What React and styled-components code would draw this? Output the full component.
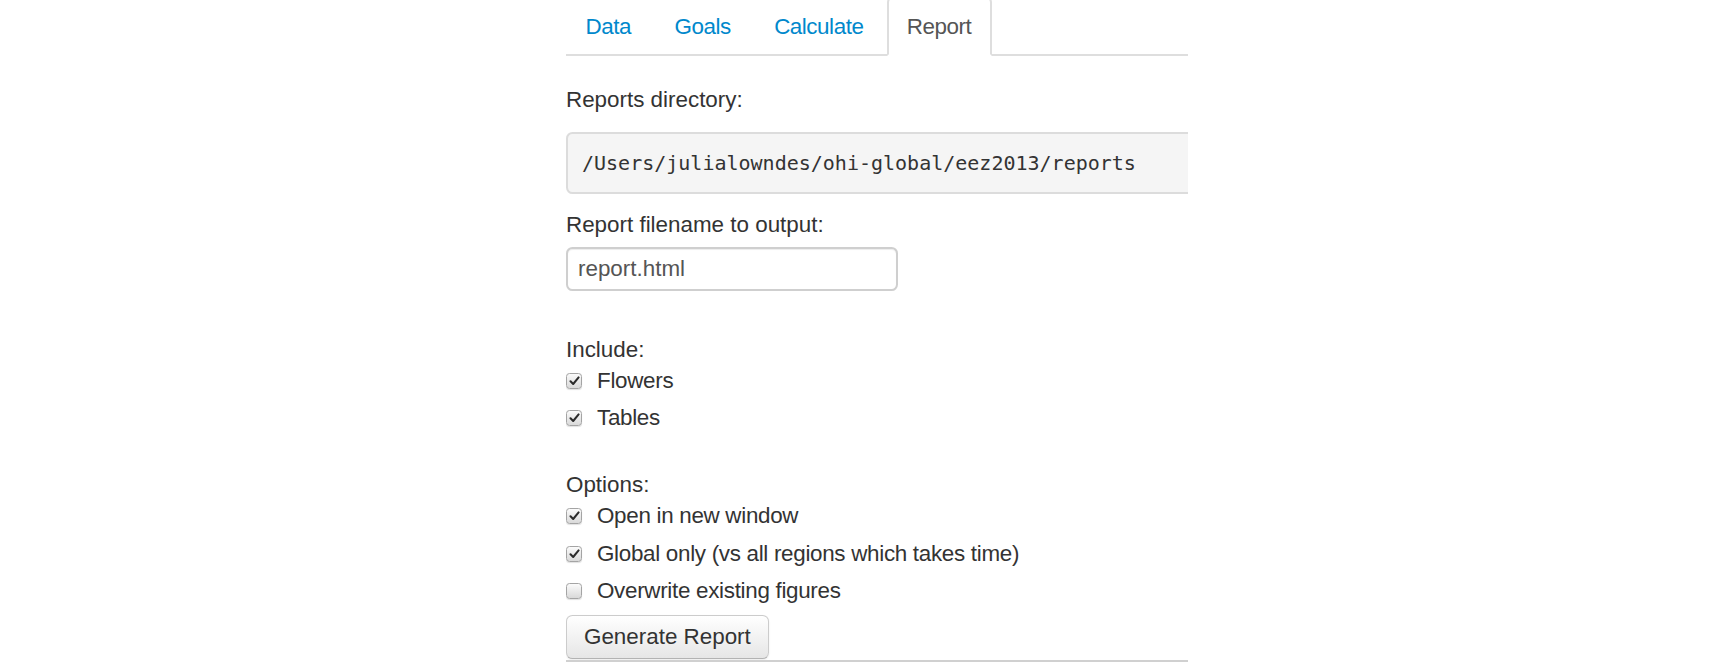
import React from "react";
import styled, { createGlobalStyle } from "styled-components";

const GlobalStyle = createGlobalStyle`
  html, body {
    margin: 0;
    padding: 0;
    overflow: hidden;
    background: #ffffff;
  }
  body {
    font-family: "Liberation Sans", Helvetica, Arial, sans-serif;
    font-size: 22.4px;
    line-height: 32px;
    color: #333333;
  }
  * { box-sizing: border-box; }
`;

const Page = styled.div`
  padding-left: 566px;
  height: 662px;
`;

const Panel = styled.div`
  width: 622px;
  overflow: hidden;
`;

const TabBar = styled.ul`
  display: flex;
  list-style: none;
  margin: -4px 0 0 0;
  padding: 0;
  border-bottom: 2px solid #dedede;
`;

const TabItem = styled.li`
  margin-bottom: -2px;
  margin-right: 2.8px;
`;

const TabLink = styled.a`
  display: block;
  padding: 13px 19px 10.8px 17.6px;
  line-height: 32px;
  letter-spacing: -0.45px;
  border: 2px solid ${(p) => (p.$active ? "#dedede" : "transparent")};
  border-bottom-color: transparent;
  border-radius: 6.4px 6.4px 0 0;
  background: ${(p) => (p.$active ? "#ffffff" : "transparent")};
  color: ${(p) => (p.$active ? "#555555" : "#0088cc")};
  text-decoration: none;
  cursor: ${(p) => (p.$active ? "default" : "pointer")};
`;

const Content = styled.div`
  display: flex;
  flex-direction: column;
  align-items: flex-start;
`;

const FieldLabel = styled.div`
  line-height: 32px;
  margin-top: ${(p) => p.$top}px;
`;

const Pre = styled.pre`
  margin: 16px 0 0 0;
  width: calc(100% + 60px);
  padding: 13px 14px;
  border: 2px solid #dcdcdc;
  border-radius: 6.4px;
  background: #f5f5f5;
  font-family: "DejaVu Sans Mono", Menlo, "Liberation Mono", monospace;
  font-size: 20px;
  line-height: 32px;
  color: #333333;
  white-space: pre;
`;

const TextInput = styled.input`
  margin-top: 6px;
  width: 332px;
  height: 44px;
  padding: 0 10px;
  border: 2px solid #cfcfcf;
  border-radius: 6.4px;
  box-shadow: inset 0 1px 1px rgba(0, 0, 0, 0.075);
  font-family: "Liberation Sans", Helvetica, Arial, sans-serif;
  font-size: 22.4px;
  color: #555555;
  outline: none;
`;

const GroupLabel = styled.div`
  line-height: 30px;
  height: 30px;
  margin-top: ${(p) => p.$top}px;
`;

const CheckList = styled.div`
  display: flex;
  flex-direction: column;
  gap: 5.5px;
`;

const CheckRow = styled.label`
  display: flex;
  align-items: center;
  height: 32px;
  gap: 15px;
  letter-spacing: -0.3px;
  cursor: pointer;
`;

const Box = styled.span`
  width: 16px;
  height: 16px;
  flex: 0 0 16px;
  border: 1px solid #a4a4a4;
  border-radius: 3.5px;
  background: linear-gradient(#fbfbfb, #d9d9d9);
  box-shadow: 0 1px 1px rgba(0, 0, 0, 0.12);
  display: flex;
  align-items: center;
  justify-content: center;
`;

const Button = styled.button`
  margin-top: 8px;
  height: 44px;
  padding: 0 17px;
  border: 1px solid #cccccc;
  border-bottom-color: #b3b3b3;
  border-radius: 6.4px;
  background: linear-gradient(#ffffff, #e6e6e6);
  box-shadow: inset 0 1px 0 rgba(255, 255, 255, 0.2), 0 1px 2px rgba(0, 0, 0, 0.08);
  font-family: "Liberation Sans", Helvetica, Arial, sans-serif;
  font-size: 22.4px;
  color: #333333;
  cursor: pointer;
`;

const Divider = styled.div`
  margin-top: 1px;
  width: 100%;
  height: 2px;
  background: #d0d0d0;
`;

function Checkbox({ checked, children }) {
  return (
    <CheckRow>
      <Box>
        {checked && (
          <svg width="11" height="10" viewBox="0 0 11 10">
            <path
              d="M1.5 5.2 L4.2 8 L9.6 1.4"
              fill="none"
              stroke="#2b2b2b"
              strokeWidth="2"
              strokeLinecap="round"
              strokeLinejoin="round"
            />
          </svg>
        )}
      </Box>
      <span>{children}</span>
    </CheckRow>
  );
}

const tabs = ["Data", "Goals", "Calculate", "Report"];

export default function App() {
  return (
    <>
      <GlobalStyle />
      <Page>
        <Panel>
          <TabBar>
            {tabs.map((t) => (
              <TabItem key={t}>
                <TabLink $active={t === "Report"}>{t}</TabLink>
              </TabItem>
            ))}
          </TabBar>
          <Content>
            <FieldLabel $top={28}>Reports directory:</FieldLabel>
            <Pre>/Users/julialowndes/ohi-global/eez2013/reports</Pre>
            <FieldLabel $top={15}>Report filename to output:</FieldLabel>
            <TextInput defaultValue="report.html" />
            <GroupLabel $top={44}>Include:</GroupLabel>
            <CheckList>
              <Checkbox checked>Flowers</Checkbox>
              <Checkbox checked>Tables</Checkbox>
            </CheckList>
            <GroupLabel $top={36}>Options:</GroupLabel>
            <CheckList>
              <Checkbox checked>Open in new window</Checkbox>
              <Checkbox checked>Global only (vs all regions which takes time)</Checkbox>
              <Checkbox>Overwrite existing figures</Checkbox>
            </CheckList>
            <Button>Generate Report</Button>
            <Divider />
          </Content>
        </Panel>
      </Page>
    </>
  );
}
